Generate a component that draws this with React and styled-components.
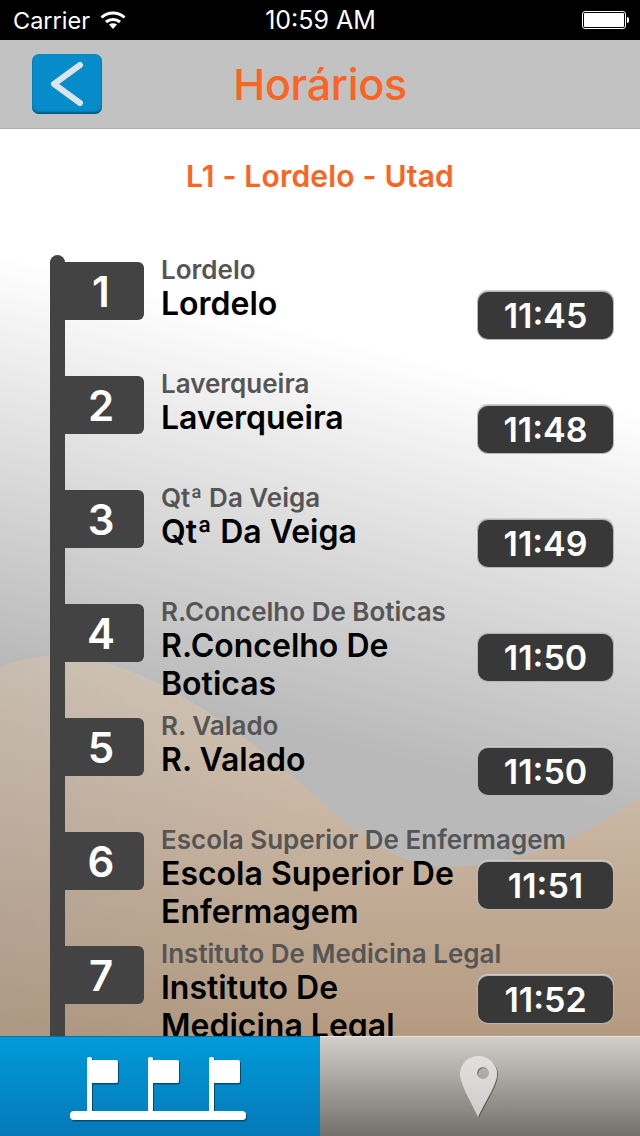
import React from 'react'
import styled, { createGlobalStyle } from 'styled-components'

const GlobalStyle = createGlobalStyle`
  html, body { margin: 0; padding: 0; background: #fff; }
  body { font-family: Inter, "Noto Sans", sans-serif; }
`

const Screen = styled.div`
  width: 640px;
  height: 1136px;
  display: flex;
  flex-direction: column;
  overflow: hidden;
`

const StatusBar = styled.div`
  height: 40px;
  flex: none;
  background: #000;
  color: #fff;
  display: grid;
  grid-template-columns: 1fr auto 1fr;
  align-items: center;
  padding: 0 12px 0 13px;
  font-size: 24px;
`

const StatusLeft = styled.div`
  display: flex;
  align-items: center;
  gap: 10px;
  font-size: 23.5px;
`

const Clock = styled.div`
  font-size: 25px;
`

const Battery = styled.div`
  justify-self: end;
  width: 44px;
  height: 18px;
  border: 1px solid #fff;
  border-radius: 3px;
  padding: 1px;
  margin-right: 2px;
  box-sizing: border-box;
  position: relative;
  background: #fff;
  background-clip: content-box;

  &::after {
    content: '';
    position: absolute;
    right: -4px;
    top: 5px;
    width: 2px;
    height: 6px;
    background: #fff;
    border-radius: 0 2px 2px 0;
  }
`

const NavBar = styled.div`
  height: 89px;
  flex: none;
  box-sizing: border-box;
  background: #c2c2c2;
  border-bottom: 1px solid #aeaeae;
  display: flex;
  align-items: center;
  justify-content: center;
  position: relative;
`

const BackButton = styled.div`
  position: absolute;
  left: 32px;
  top: 14px;
  width: 70px;
  height: 60px;
  border-radius: 7px;
  background: #068ccb;
  box-shadow: inset 0 -2px 2px rgba(0, 40, 70, 0.55);
  display: flex;
  align-items: center;
  justify-content: center;
`

const NavTitle = styled.div`
  color: #fb6423;
  font-size: 43px;
  font-weight: 500;
  letter-spacing: -0.3px;
`

const Content = styled.div`
  flex: 1;
  min-height: 0;
  position: relative;
  overflow: hidden;
  background: #fff;
`

const Backdrop = styled.svg`
  position: absolute;
  left: 0;
  top: 0;
  width: 640px;
  height: 907px;
`

const LineTitle = styled.div`
  position: relative;
  height: 126px;
  padding-top: 29px;
  box-sizing: border-box;
  text-align: center;
  color: #fb6423;
  font-size: 30px;
  font-weight: 600;
  letter-spacing: 0.2px;
  line-height: 36px;
`

const StopList = styled.div`
  position: relative;
`

const Stop = styled.div`
  height: 114px;
  display: grid;
  grid-template-columns: 15px 79px 1fr 137px;
  grid-template-rows: 30px auto;
  padding: 0 26px 0 50px;
  box-sizing: border-box;
`

const Pole = styled.div`
  grid-column: 1;
  grid-row: 1 / 3;
  background: #434343;
  border-radius: ${p => (p.$first ? '8px 8px 0 0' : '0')};
`

const Flag = styled.div`
  grid-column: 2;
  grid-row: 1 / 3;
  align-self: start;
  margin-top: 7px;
  height: 58px;
  background: #434343;
  border-radius: 0 6px 6px 0;
  color: #fff;
  font-size: 42px;
  font-weight: 600;
  display: flex;
  align-items: center;
  justify-content: center;
  padding-right: 7px;
  box-sizing: border-box;
`

const SubName = styled.div`
  grid-column: 3 / 5;
  grid-row: 1;
  margin-left: 17px;
  align-self: end;
  color: #555;
  font-size: 26px;
  font-weight: 600;
  line-height: 30px;
  white-space: nowrap;
`

const Name = styled.div`
  grid-column: 3;
  grid-row: 2;
  margin-left: 17px;
  color: #000;
  font-size: 32px;
  font-weight: 600;
  line-height: 38px;
`

const Time = styled.div`
  grid-column: 4;
  grid-row: 1 / 3;
  align-self: start;
  margin: 37px 1px 0;
  height: 47px;
  border-radius: 10px;
  background: #383838;
  box-shadow: 0 0 0 1px #b5b5b5, 0 -1px 0 1px #cdcdcd;
  color: #fff;
  font-size: 34px;
  font-weight: 600;
  display: flex;
  align-items: center;
  justify-content: center;
`

const TabBar = styled.div`
  height: 100px;
  flex: none;
  display: grid;
  grid-template-columns: 1fr 1fr;
  position: relative;
`

const Tab = styled.div`
  display: flex;
  align-items: center;
  justify-content: center;
  background: ${p => p.$active
    ? 'linear-gradient(#009ad9, #0579b8)'
    : 'linear-gradient(#d2cfcb, #736f6b)'};
  border-top: 1px solid ${p => (p.$active ? '#0a6fa8' : '#e2e2e2')};
  box-sizing: border-box;
`

const stops = [
  ['1', 'Lordelo', '11:45'],
  ['2', 'Laverqueira', '11:48'],
  ['3', 'Qtª Da Veiga', '11:49'],
  ['4', 'R.Concelho De Boticas', '11:50'],
  ['5', 'R. Valado', '11:50'],
  ['6', 'Escola Superior De Enfermagem', '11:51'],
  ['7', 'Instituto De Medicina Legal', '11:52'],
]

const Wifi = () => (
  <svg width="26" height="20" viewBox="0 0 26 20" fill="none" stroke="#fff" strokeWidth="3">
    <path d="M1.5 7.5C8 1.5 18 1.5 24.5 7.5" />
    <path d="M6 12C10 8.5 16 8.5 20 12" />
    <path d="M13 19l-4-4.5c2.3-1.7 5.7-1.7 8 0z" fill="#fff" stroke="none" />
  </svg>
)

const FlagsIcon = () => (
  <svg width="180" height="80" viewBox="0 0 180 80">
    <defs>
      <filter id="flagShadow" x="-5%" y="-5%" width="110%" height="115%">
        <feDropShadow dx="1" dy="1.5" stdDeviation="0.6" floodColor="#003a60" floodOpacity="0.8" />
      </filter>
    </defs>
    <g fill="#fff" filter="url(#flagShadow)">
      <rect x="0" y="20" width="176" height="9" rx="4" transform="translate(0 44)" />
      {[17, 78, 139].map(x => (
        <g key={x}>
          <rect x={x} y="10" width="5" height="56" rx="2" />
          <rect x={x + 4} y="13" width="27" height="23" rx="2" />
        </g>
      ))}
    </g>
  </svg>
)

const PinIcon = () => (
  <svg width="40" height="66" viewBox="0 0 40 66">
    <defs>
      <linearGradient id="pinFill" x1="0" y1="0" x2="0" y2="1">
        <stop offset="0" stopColor="#e2e0de" />
        <stop offset="1" stopColor="#cfcdca" />
      </linearGradient>
      <filter id="pinShadow" x="-10%" y="-5%" width="125%" height="115%">
        <feDropShadow dx="1" dy="1" stdDeviation="0.7" floodColor="#3a3836" floodOpacity="0.6" />
      </filter>
    </defs>
    <path
      d="M18.5 2C8 2 0 10 0 20C0 30 10 46 18 63C26 46 37 30 37 20C37 10 29 2 18.5 2Z M17 19a6 6 0 1 0 12 0a6 6 0 1 0-12 0Z"
      fill="url(#pinFill)"
      fillRule="evenodd"
      filter="url(#pinShadow)"
    />
  </svg>
)

const App = () => (
  <Screen>
    <GlobalStyle />
    <StatusBar>
      <StatusLeft>Carrier <Wifi /></StatusLeft>
      <Clock>10:59 AM</Clock>
      <Battery />
    </StatusBar>
    <NavBar>
      <BackButton>
        <svg width="34" height="46" viewBox="0 0 34 46" fill="none" stroke="#dbe4ea" strokeWidth="6" strokeLinecap="round" strokeLinejoin="round">
          <path d="M30 4L4 23l26 19" />
        </svg>
      </BackButton>
      <NavTitle>Horários</NavTitle>
    </NavBar>
    <Content>
      <Backdrop viewBox="0 0 640 907" preserveAspectRatio="none">
        <defs>
          <linearGradient id="grey" gradientUnits="userSpaceOnUse" x1="0" y1="123" x2="-96" y2="507">
            <stop offset="0" stopColor="#ffffff" />
            <stop offset="1" stopColor="#b9b9b9" />
          </linearGradient>
          <linearGradient id="tan" gradientUnits="userSpaceOnUse" x1="0" y1="526" x2="0" y2="907">
            <stop offset="0" stopColor="#d8cabb" />
            <stop offset="1" stopColor="#b59a80" />
          </linearGradient>
          <linearGradient id="tanShade" gradientUnits="userSpaceOnUse" x1="0" y1="0" x2="340" y2="0">
            <stop offset="0" stopColor="#8f8f8f" stopOpacity="0.22" />
            <stop offset="1" stopColor="#8f8f8f" stopOpacity="0" />
          </linearGradient>
        </defs>
        <rect width="640" height="907" fill="url(#grey)" />
        <path
          d="M0 539C20 530 40 526 60 527C130 530 200 570 294 648C340 690 390 738 445 738C520 738 590 705 640 668L640 907L0 907Z"
          fill="url(#tan)"
        />
        <path
          d="M0 539C20 530 40 526 60 527C130 530 200 570 294 648C340 690 390 738 445 738C520 738 590 705 640 668L640 907L0 907Z"
          fill="url(#tanShade)"
        />
      </Backdrop>
      <LineTitle>L1 - Lordelo - Utad</LineTitle>
      <StopList>
        {stops.map(([n, name, time], i) => (
          <Stop key={n}>
            <Pole $first={i === 0} />
            <Flag>{n}</Flag>
            <SubName>{name}</SubName>
            <Name>{name}</Name>
            <Time>{time}</Time>
          </Stop>
        ))}
      </StopList>
    </Content>
    <TabBar>
      <Tab $active><FlagsIcon /></Tab>
      <Tab><PinIcon /></Tab>
    </TabBar>
  </Screen>
)

export default App
